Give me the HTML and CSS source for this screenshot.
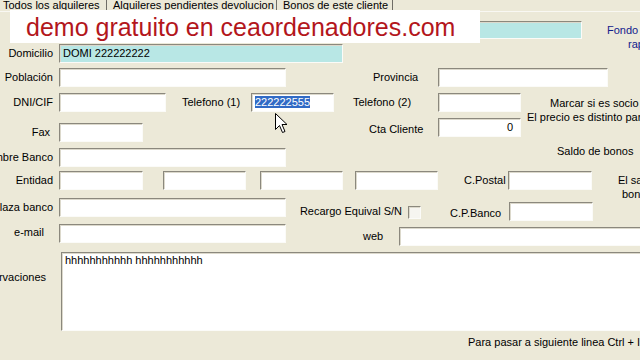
FILE: index.html
```html
<!DOCTYPE html>
<html lang="es">
<head>
<meta charset="utf-8">
<title>Ficha de cliente</title>
<link rel="stylesheet" href="styles.css">
</head>
<body>
<div class="screen">
  <div class="tabs">
    <span class="tab tab1">Todos los alquileres</span>
    <span class="tab tab2">Alquileres pendientes devolucion</span>
    <span class="tab tab3">Bonos de este cliente</span>
  </div>

  <div class="form">
    <div class="row r0">
      <div class="fld cyan w-nombre"></div>
      <div class="note fondo"><span>Fondo color</span><span class="fondo2">rapido</span></div>
    </div>

    <div class="row r1">
      <div class="lbl">Domicilio</div>
      <div class="fld cyan w-dom">DOMI 222222222</div>
    </div>

    <div class="row r2">
      <div class="lbl">Población</div>
      <div class="fld w-long"></div>
      <div class="ilbl l-prov">Provincia</div>
      <div class="fld w-prov"></div>
    </div>

    <div class="row r3">
      <div class="lbl">DNI/CIF</div>
      <div class="fld w-dni"></div>
      <div class="ilbl l-tel1">Telefono (1)</div>
      <div class="fld w-short"><span class="sel">222222555</span></div>
      <div class="ilbl l-tel2">Telefono (2)</div>
      <div class="fld w-short"></div>
      <div class="note n-socio">Marcar si es socio</div>
    </div>

    <div class="row r4">
      <div class="lbl l-fax">Fax</div>
      <div class="fld w-fax f-fax"></div>
      <div class="ilbl l-cta">Cta Cliente</div>
      <div class="fld w-short num">0</div>
      <div class="note n-precio">El precio es distinto para este cliente</div>
    </div>

    <div class="row r5">
      <div class="lbl">Nombre Banco</div>
      <div class="fld w-long"></div>
      <div class="note n-saldo">Saldo de bonos</div>
    </div>

    <div class="row r6">
      <div class="lbl">Entidad</div>
      <div class="fld w-fax"></div>
      <div class="fld w-short f-ent2"></div>
      <div class="fld w-short f-ent3"></div>
      <div class="fld w-short f-ent4"></div>
      <div class="ilbl l-cpostal">C.Postal</div>
      <div class="fld w-fax"></div>
      <div class="note n-elsaldo"><span>El saldo de</span><span class="bonos">bonos</span></div>
    </div>

    <div class="row r7">
      <div class="lbl">Plaza banco</div>
      <div class="fld w-long"></div>
      <div class="ilbl l-recargo">Recargo Equival S/N</div>
      <div class="chk"></div>
      <div class="ilbl l-cpbanco">C.P.Banco</div>
      <div class="fld w-fax f-cpbanco"></div>
    </div>

    <div class="row r8">
      <div class="lbl l-email">e-mail</div>
      <div class="fld w-long"></div>
      <div class="ilbl l-web">web</div>
      <div class="fld w-web f-web"></div>
    </div>

    <div class="row r9">
      <div class="lbl l-obs">Observaciones</div>
      <div class="area">hhhhhhhhhhh hhhhhhhhhhh</div>
    </div>

    <div class="foot">Para pasar a siguiente linea Ctrl + Intro</div>
  </div>

  <div class="banner">demo gratuito en ceaordenadores.com</div>

  <svg class="cursor" width="13" height="21" viewBox="0 0 13 21" aria-hidden="true">
    <path d="M0.5 0.5 L0.5 16.5 L4.5 12.5 L7.5 19.5 L10 18.5 L7 11.5 L12 11.5 Z" fill="#fff" stroke="#000" stroke-width="1" stroke-linejoin="miter"/>
  </svg>
</div>
</body>
</html>
```

FILE: styles.css
```css
html, body {
  margin: 0;
  width: 640px;
  height: 360px;
  overflow: hidden;
}

body {
  background: #ece9d8;
  font-family: "Liberation Sans", Arial, sans-serif;
  font-size: 11px;
  color: #000;
}

.screen {
  position: relative;
  width: 640px;
  height: 360px;
  overflow: hidden;
}

/* tab strip (top cut off) */
.tabs {
  display: flex;
  height: 12px;
  margin-top: -1px;
  line-height: 12px;
  border-bottom: 1px solid #f9f8f3;
  white-space: nowrap;
}

.tab {
  box-sizing: border-box;
  border-right: 1px solid #6f6d66;
  height: 11px;
  padding-left: 6px;
}

.tab1 { width: 107px; padding-left: 3px; }
.tab2 { width: 170px; }
.tab3 { width: 116px; }

/* form */
.form {
  display: flex;
  flex-direction: column;
}

.row {
  display: flex;
  align-items: flex-start;
  flex: none;
}

.r0 { margin-top: 9px; height: 23px; }
.r1 { height: 24px; }
.r2 { height: 25px; }
.r3 { height: 25px; }
.r4 { height: 30px; }
.r5 { height: 23px; }
.r6 { height: 27px; }
.r7 { height: 26px; }
.r8 { height: 28px; }
.r9 { height: 79px; }

.lbl {
  flex: none;
  width: 53px;
  display: flex;
  justify-content: flex-end;
  white-space: nowrap;
  line-height: 19px;
  box-sizing: border-box;
}

.lbl + .fld,
.lbl + .area { margin-left: 6px; }

.ilbl {
  flex: none;
  white-space: nowrap;
  line-height: 19px;
  box-sizing: border-box;
}

.note {
  flex: none;
  white-space: nowrap;
  line-height: 13px;
}

.fld {
  flex: none;
  box-sizing: border-box;
  height: 19px;
  background: #fff;
  border: 1px solid;
  border-color: #8b887d #fbfbf8 #fbfbf8 #8b887d;
  box-shadow: inset 1px 1px 0 #dcd9cc;
  line-height: 17px;
  padding: 0 3px;
  white-space: nowrap;
  overflow: hidden;
}

.cyan { background: #b8e7e5; }

.w-nombre { width: 522px; height: 18px; margin-left: 60px; }
.w-dom { width: 284px; }
.w-long { width: 227px; }
.w-prov { width: 170px; }
.w-dni { width: 107px; }
.w-short { width: 83px; }
.w-fax { width: 84px; }
.w-web { width: 260px; }

/* row 0 */
.fondo {
  display: flex;
  flex-direction: column;
  margin-left: 25px;
  margin-top: 2px;
  line-height: 14px;
  color: #12208c;
}
.fondo2 { padding-left: 21px; }

/* row 2 */
.l-prov { margin-left: 87px; width: 65px; }

/* row 3 */
.l-tel1 { margin-left: 16px; width: 69px; }
.l-tel2 { margin-left: 19px; width: 85px; }
.sel {
  background: #316ac5;
  color: #fff;
}
.n-socio { margin-left: 29px; margin-top: 4px; }

/* row 4 */
.l-fax { margin-top: 5px; padding-right: 3px; }
.f-fax { margin-top: 5px; }
.l-cta { margin-left: 226px; width: 69px; margin-top: 2px; }
.num { text-align: right; padding-right: 7px; }
.n-precio { margin-left: 6px; margin-top: -7px; }

/* row 5 */
.n-saldo { margin-left: 271px; margin-top: -3px; }

/* row 6 */
.f-ent2 { margin-left: 20px; }
.f-ent3 { margin-left: 14px; }
.f-ent4 { margin-left: 12px; }
.l-cpostal { margin-left: 26px; width: 44px; }
.n-elsaldo {
  display: flex;
  flex-direction: column;
  margin-left: 26px;
  margin-top: 2px;
  line-height: 14px;
}
.bonos { padding-left: 4px; }

/* row 7 */
.l-recargo {
  margin-left: 17px;
  width: 99px;
  margin-top: 4px;
  display: flex;
  justify-content: flex-end;
}
.chk {
  flex: none;
  box-sizing: border-box;
  width: 13px;
  height: 13px;
  margin-left: 6px;
  margin-top: 8px;
  background: #f6f5f0;
  border: 1px solid;
  border-color: #8b887d #fbfbf8 #fbfbf8 #8b887d;
  box-shadow: inset 1px 1px 0 #dcd9cc;
}
.l-cpbanco { margin-left: 29px; width: 59px; margin-top: 6px; }
.f-cpbanco { margin-top: 4px; }

/* row 8 */
.l-email { padding-right: 9px; margin-top: -1px; }
.l-web { margin-left: 77px; width: 36px; margin-top: 3px; }
.f-web { margin-top: 3px; }

/* row 9 */
.l-obs { padding-right: 7px; margin-top: 16px; }
.area {
  flex: none;
  box-sizing: border-box;
  width: 600px;
  height: 79px;
  margin-left: 8px !important;
  background: #fff;
  border: 1px solid;
  border-color: #8b887d #fbfbf8 #fbfbf8 #8b887d;
  box-shadow: inset 1px 1px 0 #dcd9cc;
  padding: 1px 3px;
  line-height: 13px;
  white-space: nowrap;
}

.foot {
  margin-top: 5px;
  margin-left: 468px;
  line-height: 13px;
  white-space: nowrap;
}

/* overlays */
.banner {
  position: absolute;
  left: 10px;
  top: 10px;
  width: 470px;
  height: 33px;
  box-sizing: border-box;
  padding-left: 16px;
  background: #fff;
  color: #b3161c;
  font-size: 25px;
  line-height: 34px;
  white-space: nowrap;
}

.cursor {
  position: absolute;
  left: 275px;
  top: 113px;
}
```
